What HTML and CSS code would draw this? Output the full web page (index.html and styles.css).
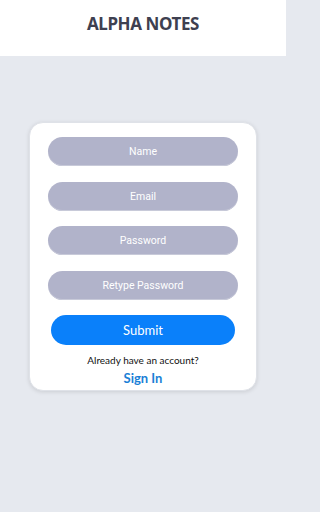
FILE: index.html
```html
<!DOCTYPE html>
<html>
<head>
<meta charset="utf-8">
<link rel="stylesheet" href="styles.css">
</head>
<body>
<header class="header"><h1 class="title">ALPHA NOTES</h1></header>
<main class="main">
  <form class="card">
    <div class="field">Name</div>
    <div class="field">Email</div>
    <div class="field">Password</div>
    <div class="field">Retype Password</div>
    <div class="submit">Submit</div>
    <p class="note">Already have an account?</p>
    <a class="signin">Sign In</a>
  </form>
</main>
</body>
</html>
```
FILE: styles.css
```css
html { margin: 0; padding: 0; background: #e6e9ef; }
body {
  margin: 0;
  padding: 0;
  width: 286px;
  height: 512px;
  background: #e6e9ef;
  font-family: "Noto Sans", "Open Sans", sans-serif;
  overflow: hidden;
}
.header {
  height: 56px;
  background: #fff;
  display: flex;
  align-items: center;
  justify-content: center;
}
.title {
  margin: 0;
  font-size: 17px;
  font-weight: 700;
  color: #3e4050;
  letter-spacing: -0.4px;
  transform: translateY(-5px);
}
.main {
  padding: 66px 29px 0 29px;
}
.card {
  background: #fff;
  border-radius: 14px;
  box-shadow: 0 1px 4px rgba(0,0,0,0.12);
  border: 1px solid #dfe2e8;
  padding: 14px 19px 0 19px;
  display: flex;
  flex-direction: column;
  align-items: center;
  height: 269px;
  box-sizing: border-box;
}
.card > * { flex-shrink: 0; }
.field {
  width: 190px;
  height: 29px;
  border-radius: 15px;
  background: #b1b3ca;
  color: #fff;
  font-family: Roboto, "Noto Sans", sans-serif;
  font-size: 10.5px;
  display: flex;
  align-items: center;
  justify-content: center;
  margin-bottom: 15.5px;
  box-shadow: inset 0 -1px 0 #c8cad9;
}
.submit {
  width: 184px;
  height: 30px;
  border-radius: 15px;
  background: #0a80fa;
  color: #fff;
  font-family: Lato, "Noto Sans", sans-serif;
  font-size: 13px;
  font-weight: 400;
  display: flex;
  align-items: center;
  justify-content: center;
}
.note {
  margin: 8px 0 0 0;
  font-family: Lato, "Noto Sans", sans-serif;
  font-size: 10px;
  color: #111;
  line-height: 14px;
}
.signin {
  margin-top: 3px;
  font-family: Lato, "Noto Sans", sans-serif;
  font-size: 13px;
  font-weight: 700;
  color: #1a7fd6;
  line-height: 16px;
}
```
